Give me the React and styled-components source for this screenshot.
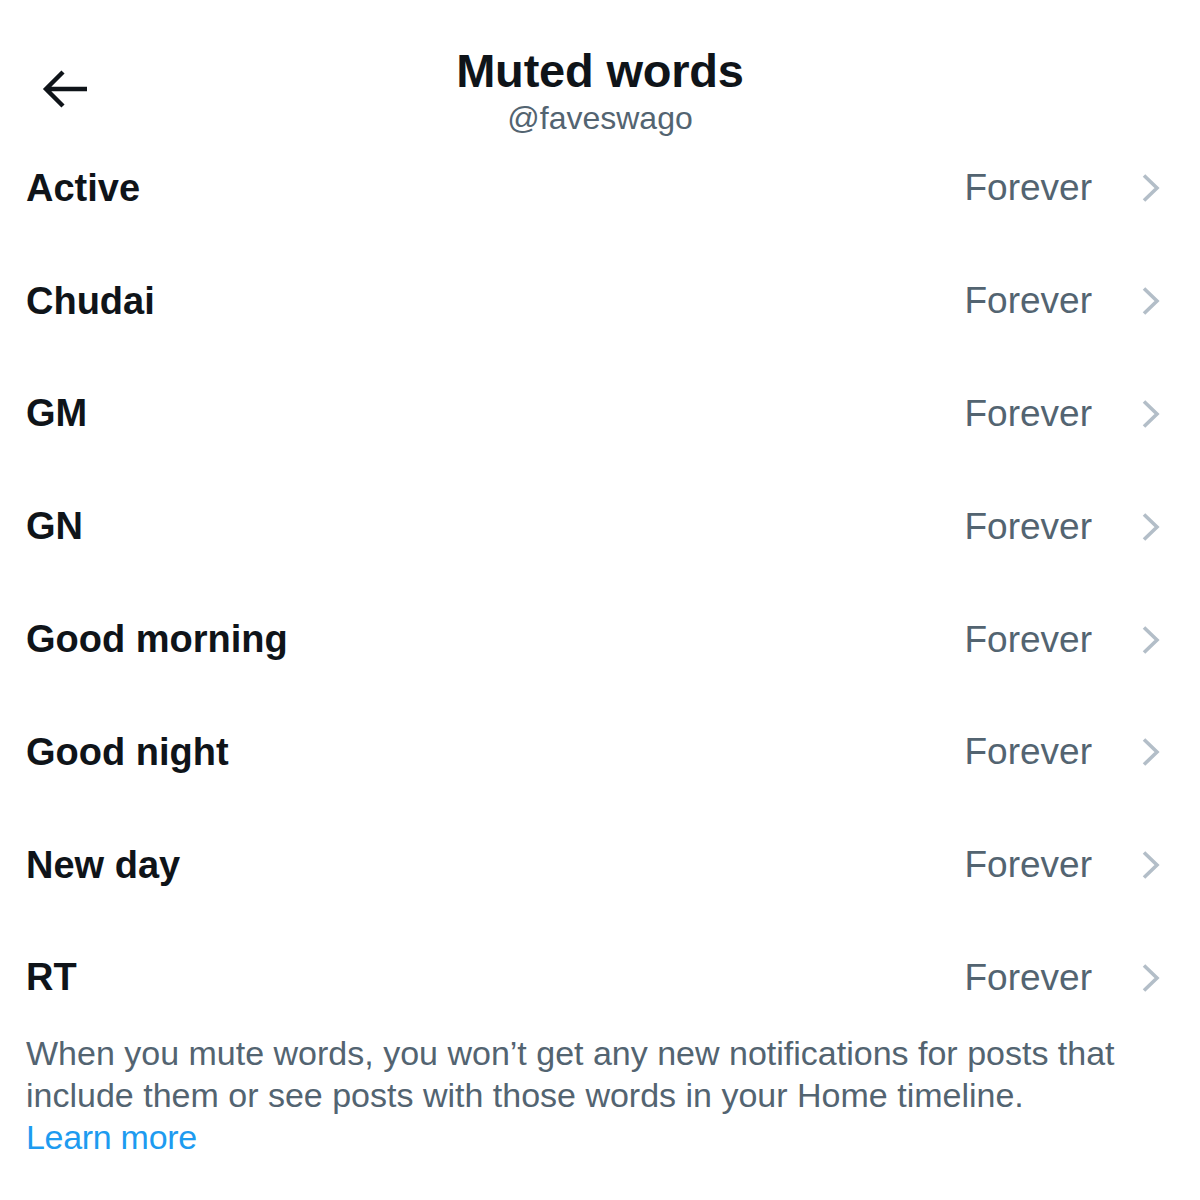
import React from 'react';
import styled, { createGlobalStyle } from 'styled-components';

const words = ['Active', 'Chudai', 'GM', 'GN', 'Good morning', 'Good night', 'New day', 'RT'];

const GlobalStyle = createGlobalStyle`
  body {
    margin: 0;
    background: #ffffff;
    font-family: "Liberation Sans", Arial, sans-serif;
  }
`;

const Page = styled.div`
  width: 1200px;
  min-height: 1200px;
  background: #ffffff;
  color: #0f1419;
`;

const Header = styled.header`
  display: grid;
  grid-template-columns: 1fr auto 1fr;
  height: 132px;
  box-sizing: border-box;
  padding-top: 44px;
`;

const BackButton = styled.button`
  justify-self: start;
  align-self: start;
  margin: 25px 0 0 41px;
  padding: 0;
  border: none;
  background: none;
  display: flex;
  color: #0f1419;
`;

const TitleBlock = styled.div`
  display: flex;
  flex-direction: column;
  align-items: center;
`;

const Title = styled.h1`
  margin: 0;
  font-size: 47px;
  line-height: 53px;
  font-weight: 700;
  letter-spacing: -0.2px;
`;

const Handle = styled.div`
  margin-top: 3px;
  font-size: 32px;
  line-height: 36px;
  color: #536471;
`;

const List = styled.ul`
  list-style: none;
  margin: 0;
  padding: 0;
`;

const Row = styled.li`
  display: flex;
  align-items: center;
  height: 112.8px;
  padding: 0 38px 0 26px;
`;

const Word = styled.span`
  flex: 1;
  font-size: 38px;
  font-weight: 700;
`;

const Duration = styled.span`
  font-size: 37px;
  color: #536471;
`;

const Chevron = styled.svg`
  margin-left: 48px;
  width: 22px;
  height: 32px;
  color: #b3bec8;
`;

const Note = styled.p`
  margin: -2px 0 0;
  padding: 0 60px 0 26px;
  font-size: 34px;
  line-height: 42px;
  color: #536471;
`;

const LearnMore = styled.a`
  display: block;
  color: #1d9bf0;
  text-decoration: none;
  letter-spacing: -0.3px;
`;

const BackArrow = () => (
  <svg width="48" height="40" viewBox="0 0 48 40" fill="none">
    <path
      d="M46 20H5M22 3L5 20l17 17"
      stroke="currentColor"
      strokeWidth="4.4"
      strokeLinecap="butt"
      strokeLinejoin="miter"
    />
  </svg>
);

const App = () => {
  return (
    <Page>
      <GlobalStyle />
      <Header>
        <BackButton aria-label="Back">
          <BackArrow />
        </BackButton>
        <TitleBlock>
          <Title>Muted words</Title>
          <Handle>@faveswago</Handle>
        </TitleBlock>
      </Header>

      <List>
        {words.map((w) => (
          <Row key={w}>
            <Word>{w}</Word>
            <Duration>Forever</Duration>
            <Chevron viewBox="0 0 22 32" fill="none">
              <path d="M4 3.5l13 12.5L4 28.5" stroke="currentColor" strokeWidth="3.6" />
            </Chevron>
          </Row>
        ))}
      </List>

      <Note>
        When you mute words, you won’t get any new notifications for posts that include them or see
        posts with those words in your Home timeline.
        <LearnMore href="#">Learn more</LearnMore>
      </Note>
    </Page>
  );
};

export default App;
